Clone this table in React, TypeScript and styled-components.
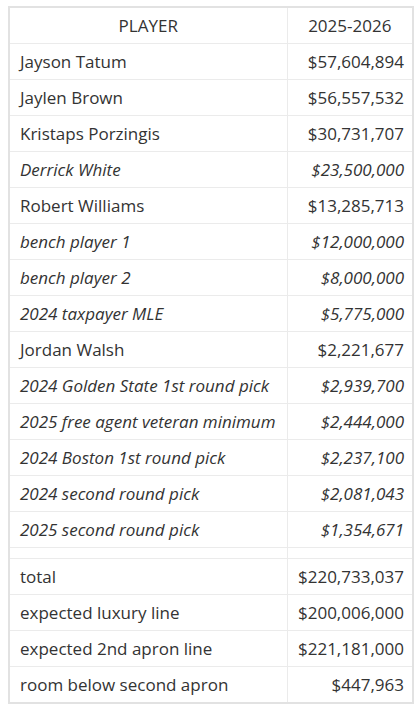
import React from "react";
import styled, {createGlobalStyle} from "styled-components";

const GlobalStyle = createGlobalStyle`
  body {
    margin: 0;
    background: #ffffff;
    font-family: "Open Sans", "Liberation Sans", sans-serif;
    color: #333333;
  }
`

const Page = styled.div`
  padding: 6px 8px;
`

const Table = styled.table`
  width: 404px;
  table-layout: fixed;
  border-collapse: collapse;
  border: 2px solid #e2e2e2;
  font-size: 17px;
  line-height: 23px;
`

const Col = styled.col<{ $width: number }>`
  width: ${p => p.$width}px;
`

const HeadCell = styled.th`
  height: 35px;
  padding: 0 8px;
  font-weight: 400;
  text-align: center;
  border: 1px solid #ebebeb;
`

const Cell = styled.td<{ $right?: boolean; $italic?: boolean }>`
  height: 35px;
  padding: 0 8px 0 10px;
  text-align: ${p => (p.$right ? "right" : "left")};
  font-style: ${p => (p.$italic ? "italic" : "normal")};
  border: 1px solid #ebebeb;
  white-space: nowrap;
`

const SpacerCell = styled.td`
  height: 10px;
  padding: 0;
  border: 1px solid #ebebeb;
`

type Row = { name: string; amount: string; italic?: boolean }

const players: Row[] = [
    {name: "Jayson Tatum", amount: "$57,604,894"},
    {name: "Jaylen Brown", amount: "$56,557,532"},
    {name: "Kristaps Porzingis", amount: "$30,731,707"},
    {name: "Derrick White", amount: "$23,500,000", italic: true},
    {name: "Robert Williams", amount: "$13,285,713"},
    {name: "bench player 1", amount: "$12,000,000", italic: true},
    {name: "bench player 2", amount: "$8,000,000", italic: true},
    {name: "2024 taxpayer MLE", amount: "$5,775,000", italic: true},
    {name: "Jordan Walsh", amount: "$2,221,677"},
    {name: "2024 Golden State 1st round pick", amount: "$2,939,700", italic: true},
    {name: "2025 free agent veteran minimum", amount: "$2,444,000", italic: true},
    {name: "2024 Boston 1st round pick", amount: "$2,237,100", italic: true},
    {name: "2024 second round pick", amount: "$2,081,043", italic: true},
    {name: "2025 second round pick", amount: "$1,354,671", italic: true},
]

const totals: Row[] = [
    {name: "total", amount: "$220,733,037"},
    {name: "expected luxury line", amount: "$200,006,000"},
    {name: "expected 2nd apron line", amount: "$221,181,000"},
    {name: "room below second apron", amount: "$447,963"},
]

const renderRow = (r: Row) => (
    <tr key={r.name}>
        <Cell $italic={r.italic}>{r.name}</Cell>
        <Cell $right $italic={r.italic}>{r.amount}</Cell>
    </tr>
)

export default function App() {
    return (
        <Page>
            <GlobalStyle/>
            <Table>
                <colgroup>
                    <Col $width={278}/>
                    <Col $width={126}/>
                </colgroup>
                <thead>
                <tr>
                    <HeadCell>PLAYER</HeadCell>
                    <HeadCell>2025-2026</HeadCell>
                </tr>
                </thead>
                <tbody>
                {players.map(renderRow)}
                <tr>
                    <SpacerCell/>
                    <SpacerCell/>
                </tr>
                {totals.map(renderRow)}
                </tbody>
            </Table>
        </Page>
    )
}
